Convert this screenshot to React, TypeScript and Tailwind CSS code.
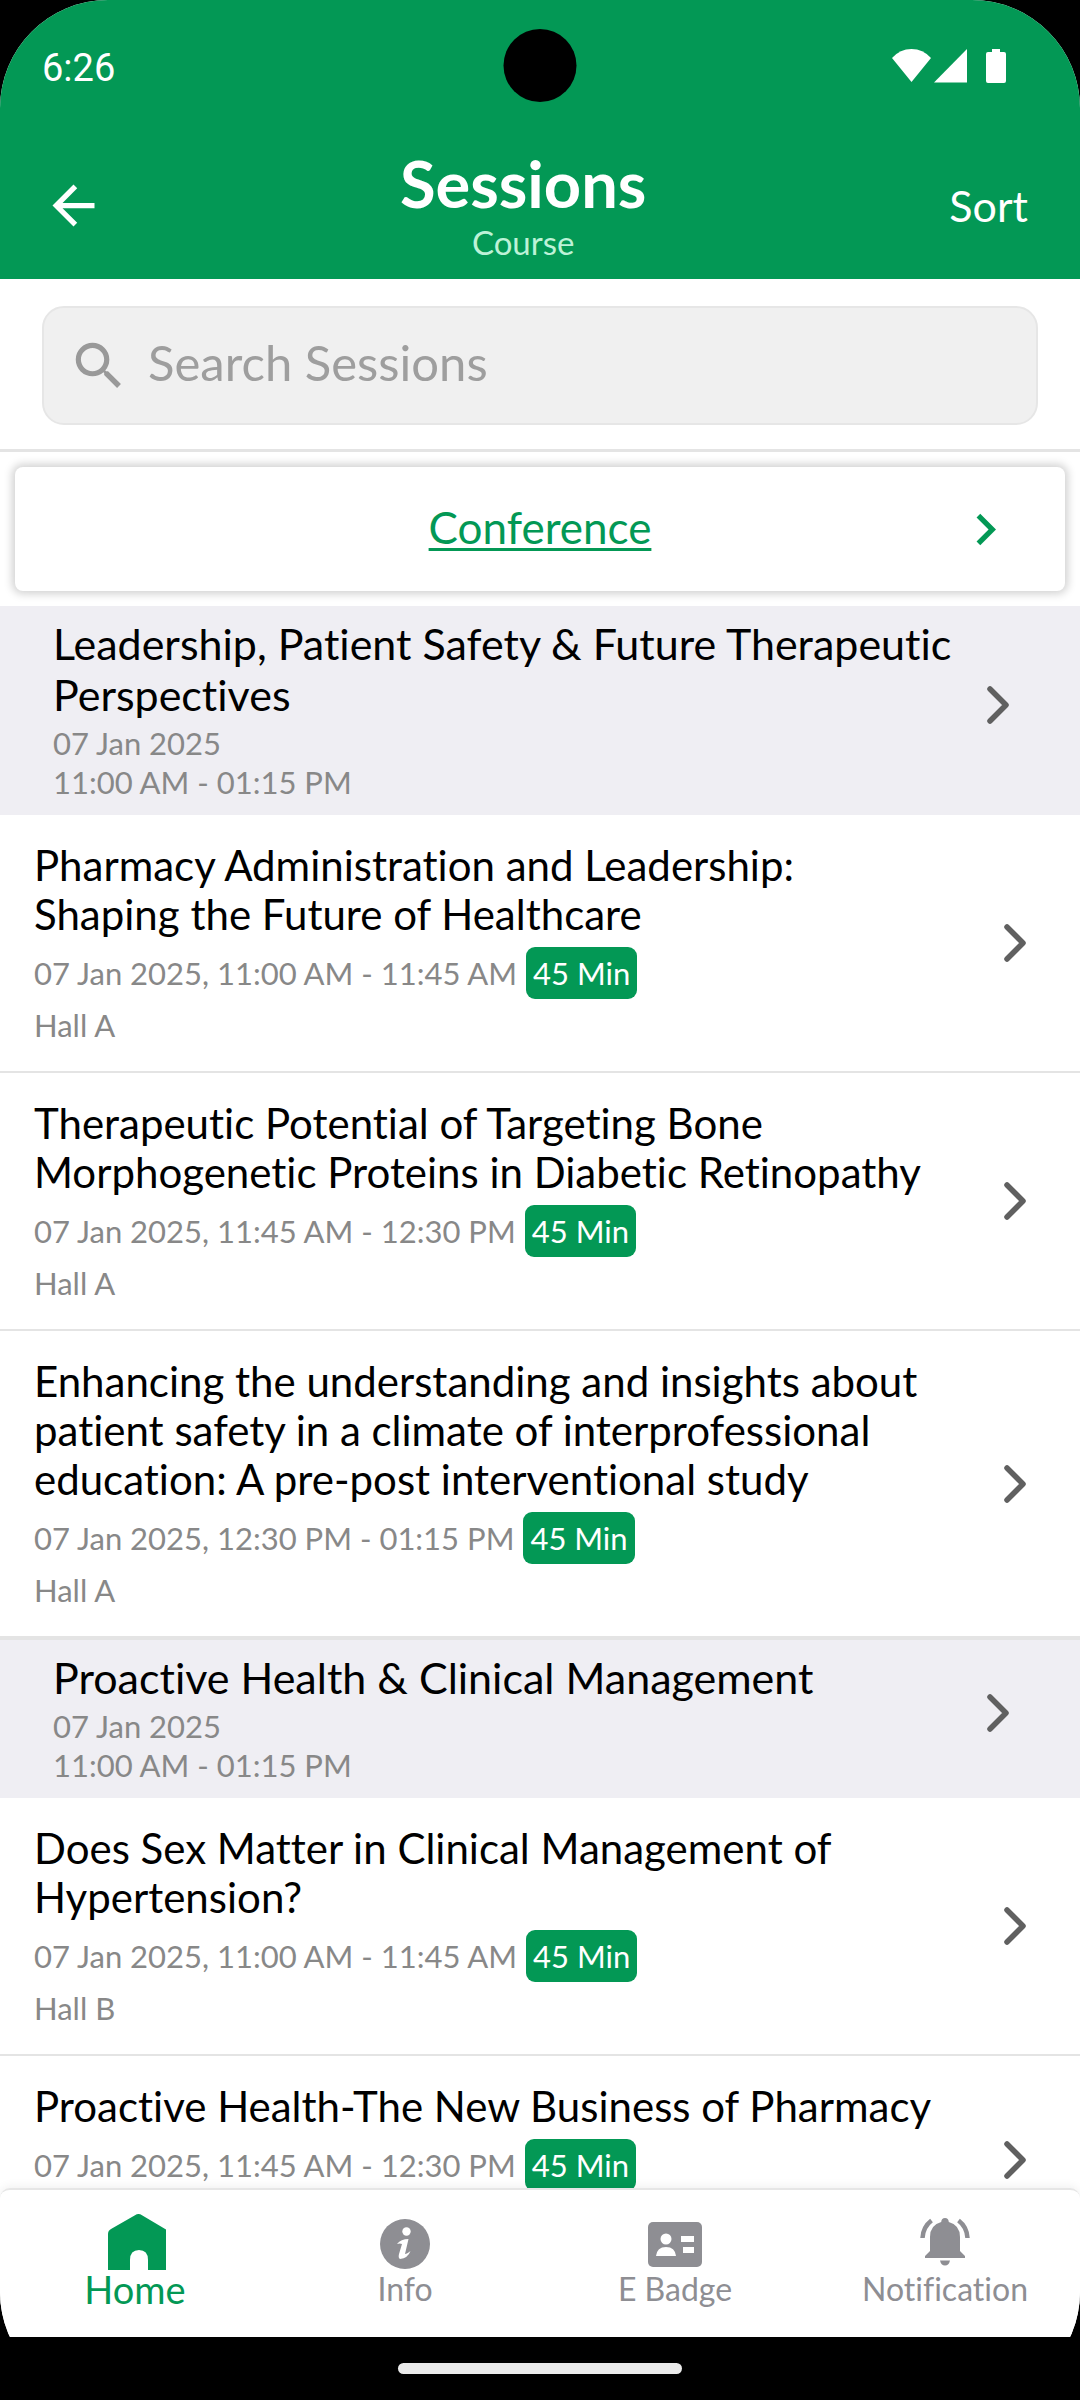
import { useState } from "react";
import { MdArrowBack, MdChevronRight, MdSearch } from "react-icons/md";

interface Talk {
    title: string;
    time: string;
    duration: string;
    hall: string;
}

interface Course {
    title: string;
    date: string;
    time: string;
    talks: Talk[];
}

const courses: Course[] = [
    {
        title: "Leadership, Patient Safety & Future Therapeutic Perspectives",
        date: "07 Jan 2025",
        time: "11:00 AM - 01:15 PM",
        talks: [
            {
                title: "Pharmacy Administration and Leadership: Shaping the Future of Healthcare",
                time: "07 Jan 2025, 11:00 AM - 11:45 AM",
                duration: "45 Min",
                hall: "Hall A",
            },
            {
                title: "Therapeutic Potential of Targeting Bone Morphogenetic Proteins in Diabetic Retinopathy",
                time: "07 Jan 2025, 11:45 AM - 12:30 PM",
                duration: "45 Min",
                hall: "Hall A",
            },
            {
                title: "Enhancing the understanding and insights about patient safety in a climate of interprofessional education: A pre-post interventional study",
                time: "07 Jan 2025, 12:30 PM - 01:15 PM",
                duration: "45 Min",
                hall: "Hall A",
            },
        ],
    },
    {
        title: "Proactive Health & Clinical Management",
        date: "07 Jan 2025",
        time: "11:00 AM - 01:15 PM",
        talks: [
            {
                title: "Does Sex Matter in Clinical Management of Hypertension?",
                time: "07 Jan 2025, 11:00 AM - 11:45 AM",
                duration: "45 Min",
                hall: "Hall B",
            },
            {
                title: "Proactive Health-The New Business of Pharmacy",
                time: "07 Jan 2025, 11:45 AM - 12:30 PM",
                duration: "45 Min",
                hall: "Hall B",
            },
        ],
    },
];

const HomeIcon = () => (
    <svg width="62" height="56" viewBox="-4 0 62 56" fill="currentColor" aria-hidden="true">
        <path d="M27 1.2Q30.500-1 34 1.200L58 15.500V56H40V46Q40 36 31 36Q22 36 22 46V56H0V20Q0 16.500 3 15Z" />
    </svg>
);

const InfoIcon = () => (
    <svg width="50" height="54" viewBox="0 -4 50 54" aria-hidden="true">
        <circle cx="25" cy="25" r="25" fill="currentColor" />
        <circle cx="26.500" cy="12.500" r="4.200" fill="#fff" />
        <path d="M17 25Q21 20 28.500 20L25 35Q27 35 30.500 32Q28 39 20 40Q18 39 19 35L22 25Q20 24 17 25Z" fill="#fff" />
    </svg>
);

const BadgeIcon = () => (
    <svg width="54" height="49" viewBox="0 -4 54 49" aria-hidden="true">
        <rect width="54" height="45" rx="5" fill="currentColor" />
        <circle cx="18" cy="17" r="5.500" fill="#fff" />
        <path d="M8 34Q9 25 18 25Q27 25 28 34Z" fill="#fff" />
        <path d="M33 14H46V20H33ZM35 25H46V31H35Z" fill="#fff" />
    </svg>
);

const BellIcon = () => (
    <svg width="50" height="48" viewBox="0 0 50 48" aria-hidden="true">
        <path d="M25 0Q28.500 0 28.800 4Q40 7 40 19V33L45 38V40H5V38L10 33V19Q10 7 21.200 4Q21.500 0 25 0Z" fill="currentColor" />
        <path d="M20 42.500H30Q29 47.500 25 47.500Q21 47.500 20 42.500Z" fill="currentColor" />
        <path d="M2.500 20Q3 9 11.500 2.500M47.500 20Q47 9 38.500 2.500" fill="none" stroke="currentColor" strokeWidth="4.500" />
    </svg>
);

const Chevron = () => (
    <svg width="22" height="38" viewBox="0 0 22 38" fill="none" className="shrink-0 text-[#606060]" aria-hidden="true">
        <path d="M3 3L19 19L3 35" stroke="currentColor" strokeWidth="5.500" strokeLinecap="round" strokeLinejoin="round" />
    </svg>
);

const tabs = [
    { label: "Home", Icon: HomeIcon },
    { label: "Info", Icon: InfoIcon },
    { label: "E Badge", Icon: BadgeIcon },
    { label: "Notification", Icon: BellIcon },
];

function StatusBar() {
    return (
        <div className="relative flex h-[132px] items-start justify-between pt-[46px] pr-[74px] pl-[42px]">
            <span className="font-[Roboto,sans-serif] text-[38px] leading-[45px]">6:26</span>
            <div className="absolute top-[29px] left-1/2 size-[73px] -translate-x-1/2 rounded-full bg-black" />
            <svg width="114" height="36" viewBox="0 0 114 36" fill="#fff" className="mt-[3px]" aria-hidden="true">
                <path d="M0 9Q8 0 19.500 0Q31 0 39 9L19.500 33Z" />
                <path d="M75 0V33.500H42Z" />
                <path d="M100 0H108V3H112Q114 3 114 5V32Q114 34 112 34H96Q94 34 94 32V5Q94 3 96 3H100Z" />
            </svg>
        </div>
    );
}

function TalkRow({ talk }: { talk: Talk }) {
    return (
        <a href="#" className="flex items-center border-b-2 border-[#e4e4e4] py-[26px] pr-[54px] pl-[34px]">
            <div className="flex-1">
                <h3 className="pr-[70px] text-[42px] leading-[49px] text-black">{talk.title}</h3>
                <div className="mt-2 flex items-center gap-[9px] text-[31px] leading-[52px] text-[#888]">
                    <span>{talk.time}</span>
                    <span className="rounded-[9px] bg-[#039855] px-[7px] text-white">{talk.duration}</span>
                </div>
                <p className="mt-[7px] text-[31px] leading-[39px] text-[#888]">{talk.hall}</p>
            </div>
            <Chevron />
        </a>
    );
}

export default function App() {
    const [query, setQuery] = useState("");
    const [active, setActive] = useState("Home");

    return (
        <div className="h-screen bg-black font-[Lato,sans-serif] [font-variant-ligatures:none]">
            <div className="flex h-full flex-col overflow-hidden rounded-[108px]">
                <div className="flex min-h-0 flex-1 flex-col bg-white">
                    <header className="bg-[#039855] text-white">
                        <StatusBar />
                        <div className="flex h-[147px] items-center pr-[52px] pl-[42px]">
                            <button type="button" aria-label="Back">
                                <MdArrowBack size={63} />
                            </button>
                            <div className="flex-1 text-center">
                                <h1 className="text-[65px] leading-[70px] font-bold">Sessions</h1>
                                <p className="mt-1 text-[33px] leading-[41px] text-[#bdf2d7]">Course</p>
                            </div>
                            <button type="button" className="pl-2 text-[43px] leading-[51px]">Sort</button>
                        </div>
                    </header>

                    <div className="border-b-[3px] border-[#e4e4e4] px-[42px] pt-[27px] pb-6">
                        <label className="flex h-[119px] items-center gap-[18px] rounded-[22px] border-2 border-[#e6e6e6] bg-[#f0f0f0] px-6">
                            <MdSearch size={62} className="shrink-0 text-[#999]" />
                            <input
                                type="search"
                                aria-label="Search Sessions"
                                placeholder="Search Sessions"
                                value={query}
                                onChange={(e) => setQuery(e.target.value)}
                                className="min-w-0 flex-1 bg-transparent pb-2 text-[49px] leading-[58px] outline-none placeholder:text-[#9e9e9e]"
                            />
                        </label>
                    </div>

                    <a
                        href="#"
                        className="mx-[15px] my-[15px] flex h-[124px] shrink-0 items-center rounded-lg pr-12 pl-[111px] text-[#039855] shadow-[0_0_8px_3px_rgba(0,0,0,0.18)]"
                    >
                        <span className="flex-1 pb-1 text-center text-[44px] leading-[54px] underline decoration-[3px] underline-offset-[4px]">Conference</span>
                        <MdChevronRight size={63} />
                    </a>

                    <main className="min-h-0 flex-1 divide-y-2 divide-[#e4e4e4] overflow-y-auto [scrollbar-width:none]">
                        {courses.map((course) => (
                            <section key={course.title}>
                                <div className="bg-[#efeef3] pb-3">
                                    <a href="#" className="flex items-center pr-[71px] pl-[53px]">
                                        <div className="flex-1 pt-3 pb-[1px]">
                                            <h2 className="text-[43px] leading-[51px] text-black">{course.title}</h2>
                                            <p className="mt-1 text-[31px] leading-[39px] text-[#888]">{course.date}</p>
                                            <p className="text-[31px] leading-[39px] text-[#888]">{course.time}</p>
                                        </div>
                                        <Chevron />
                                    </a>
                                </div>
                                {course.talks.map((talk) => (
                                    <TalkRow key={talk.title} talk={talk} />
                                ))}
                            </section>
                        ))}
                    </main>

                    <nav className="relative grid h-[149px] shrink-0 grid-cols-4 rounded-t-[10px] border-t-2 border-[#e6e6e6] bg-white shadow-[0_-2px_10px_rgba(0,0,0,0.06)]">
                        {tabs.map(({ label, Icon }) => (
                            <button
                                key={label}
                                type="button"
                                onClick={() => setActive(label)}
                                className={
                                    active === label
                                        ? "flex flex-col items-center pt-6 text-[38px] text-[#039855]"
                                        : "flex flex-col items-center pt-6 text-[32px] text-[#8e8e93]"
                                }
                            >
                                <span className="flex h-[56px] items-center">
                                    <Icon />
                                </span>
                                <span className="leading-[38px]">{label}</span>
                            </button>
                        ))}
                    </nav>
                </div>
                <div className="flex h-[63px] shrink-0 items-start justify-center pt-[26px]">
                    <div className="h-[11px] w-[284px] rounded-full bg-[#ebebeb]" />
                </div>
            </div>
        </div>
    );
}
